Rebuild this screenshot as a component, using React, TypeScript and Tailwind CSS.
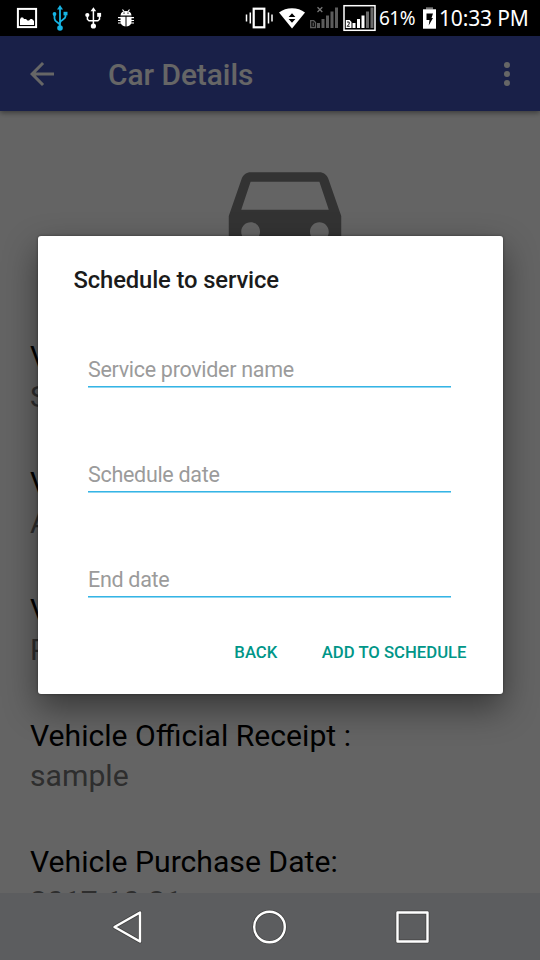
import React from "react";

const rows = [
  ["V", "S"],
  ["V", "A"],
  ["V", "P"],
  ["Vehicle Official Receipt :", "sample"],
  ["Vehicle Purchase Date:", "2017-10-21"],
];

const fields = ["Service provider name", "Schedule date", "End date"];

function NotificationIcons() {
  return (
    <svg width="142" height="36" viewBox="0 0 142 36" fill="none">
      <rect x="17.9" y="8.9" width="18.2" height="18.2" stroke="#fff" strokeWidth="2" />
      <path d="M20 25v-5.500l1-2h2l1 1.500h2l1.500 1.500h1.500l1.500-1.500h1.500l2 2V25z" fill="#fff" />
      <g stroke="#16b4e4" strokeWidth="1.8">
        <path d="M60 9v19M60 25.500c0-3-5.500-3-5.500-7V14M60 23c0-3 5.500-3.500 5.500-6.500V13" />
      </g>
      <g fill="#16b4e4">
        <path d="M60 5l3 4.500h-6z" />
        <circle cx="60" cy="28" r="2.800" />
        <circle cx="54.500" cy="14" r="1.900" />
        <rect x="63.500" y="11.800" width="4" height="3.500" />
      </g>
      <path d="M93.400 10v16M93.400 20.700h-4.400l-1.600-1.500V15M93.400 20.700h4.400l1.700-1.500V14.500" stroke="#fff" strokeWidth="1.500" />
      <g fill="#fff">
        <path d="M93.400 7.200l2.800 4h-5.600z" />
        <circle cx="93.400" cy="26" r="2.600" />
        <circle cx="87.300" cy="15" r="2.100" />
        <rect x="97.200" y="12.900" width="3.900" height="3.900" />
        <path d="M120.500 15.600c.2-3.200 2.400-4.600 5.500-4.600s5.300 1.400 5.500 4.600z" />
        <path d="M120.500 16.700h5v9.800c-3-.3-5-2-5-5zM126.500 16.700h5v4.800c0 3-2 4.700-5 5z" />
      </g>
      <path d="M122.500 9.500l1.500 2M129.500 9.500l-1.500 2M118 17.700h3M118 20.500h3M118 23h3M131 17.700h3M131 20.500h3M131 23h3" stroke="#fff" strokeWidth="1.200" />
      <path d="M124 12.500v1.300M128 12.500v1.300" stroke="#000" />
    </svg>
  );
}

function SignalIcons() {
  return (
    <svg width="134" height="36" viewBox="244 0 134 36" fill="none">
      <rect x="253.700" y="8.700" width="10.600" height="18.600" stroke="#fff" strokeWidth="2.200" />
      <path d="M250.300 12.500v11M246.500 14.500v7M268.500 12.500v11M272 14.500v7" stroke="#fff" strokeWidth="1.500" />
      <path d="M279 12.500c7-5.700 19-5.700 26 0L292 28.500z" fill="#fff" />
      <path d="M292 13.200l3.400 3.800h-6.800zM292 22.700l3.400-3.800h-6.800z" fill="#000" />
      <g fill="#5c5c5c">
        <rect x="317" y="23" width="3" height="5" />
        <rect x="321.500" y="19" width="3" height="9" />
        <rect x="326" y="15.500" width="3" height="12.500" />
        <rect x="330.500" y="11.500" width="3" height="16.500" />
        <rect x="335" y="7.500" width="3" height="20.500" />
      </g>
      <path d="M317.500 7.200l4.800 4.800M322.300 7.200l-4.800 4.800" stroke="#777" strokeWidth="1.300" />
      <path d="M310.700 20.700h3l1.800 1.800v5h-4.800zM313.200 22.500v3.500" stroke="#5c5c5c" strokeWidth="1.300" />
      <rect x="344" y="5.700" width="31" height="24.600" stroke="#fff" strokeWidth="1.500" />
      <path d="M345.800 20h3.800l1.900 1.900v6.100h-5.700z" fill="#fff" />
      <path d="M347 22h2.200v2l-2 2.300h2.500" stroke="#000" strokeWidth=".9" />
      <g fill="#fff">
        <rect x="352.500" y="23" width="3" height="5" />
        <rect x="357" y="19" width="3" height="9" />
        <rect x="361.500" y="15.500" width="3" height="12.500" />
      </g>
      <g fill="#6b6b6b">
        <rect x="366" y="11.500" width="3" height="16.500" />
        <rect x="370.500" y="7.500" width="3" height="20.500" />
      </g>
    </svg>
  );
}

function StatusBar() {
  return (
    <header className="flex h-9 w-full shrink-0 items-center bg-black font-['Noto_Sans',sans-serif] text-white">
      <NotificationIcons />
      <div className="w-[102px]" />
      <SignalIcons />
      <span className="ml-[1px] w-[44px] text-[19px] leading-9 tracking-[-0.5px] whitespace-nowrap">61%</span>
      <svg width="14" height="36" viewBox="423 0 14 36" className="shrink-0">
        <rect x="426" y="7.300" width="7" height="2.200" fill="#777" />
        <rect x="423" y="9.300" width="13" height="19.400" fill="#fff" />
        <path d="M426.500 13.500h6.500l-1.500 4.500h1.500l-4.300 7.500.8-5.500h-3z" fill="#000" />
      </svg>
      <span className="ml-[2px] text-[21px] leading-9 tracking-[-0.15px] whitespace-nowrap">10:33 PM</span>
    </header>
  );
}

function AppBar() {
  return (
    <div className="flex h-[75px] shrink-0 items-center bg-[#3f51b5] pr-[15px] pl-6 text-white shadow-[0_2px_5px_rgba(0,0,0,0.4)]">
      <svg width="36" height="36" viewBox="0 0 24 24" fill="currentColor">
        <path d="M20 11H7.830l5.590-5.590L12 4l-8 8 8 8 1.410-1.410L7.830 13H20v-2z" />
      </svg>
      <h1 className="ml-12 flex-1 pt-[3px] text-[29.8px] leading-[44px] font-medium">Car Details</h1>
      <svg width="36" height="36" viewBox="0 0 24 24" fill="currentColor">
        <circle cx="12" cy="6" r="2" />
        <circle cx="12" cy="12" r="2" />
        <circle cx="12" cy="18" r="2" />
      </svg>
    </div>
  );
}

function Details() {
  return (
    <main className="min-h-0 flex-1 overflow-hidden pt-[30px] pl-[30px]">
      <svg width="150" height="150" viewBox="0 0 24 24" fill="#808080" className="ml-[180px]">
        <path d="M18.920 6.010C18.720 5.420 18.160 5 17.500 5h-11c-.66 0-1.210.42-1.420 1.010L3 12v8c0 .55.45 1 1 1h1c.55 0 1-.45 1-1v-1h12v1c0 .55.45 1 1 1h1c.55 0 1-.45 1-1v-8l-2.080-5.990zM6.500 16c-.83 0-1.500-.67-1.500-1.500S5.670 13 6.500 13s1.500.67 1.500 1.500S7.330 16 6.500 16zm11 0c-.83 0-1.500-.67-1.500-1.500s.67-1.500 1.500-1.500 1.500.67 1.500 1.500-.67 1.500-1.500 1.500zM5 11l1.500-4.500h11L19 11H5z" />
      </svg>
      <dl className="mt-[45px] flex flex-col gap-[45.3px] text-[30.15px] leading-[41px]">
        {rows.map(([label, value], index) => (
          <div key={index}>
            <dt className="h-10 text-black">{label}</dt>
            <dd className="text-[#737373]">{value}</dd>
          </div>
        ))}
      </dl>
    </main>
  );
}

function ScheduleDialog() {
  return (
    <div className="absolute inset-x-0 top-9 bottom-[67px] bg-black/60">
      <section className="mt-[200px] ml-[37.5px] flex h-[457.5px] w-[465px] flex-col rounded-[3px] bg-white shadow-[0_14px_34px_rgba(0,0,0,0.45),0_0_3px_rgba(0,0,0,0.4)]">
        <h2 className="mt-[27px] ml-9 text-[23.8px] leading-[34px] font-medium tracking-[-0.13px] text-[#1b1b1b]">Schedule to service</h2>
        <div className="mt-[53px] ml-[50.5px] flex w-[363px] flex-col gap-[68px]">
          {fields.map((label) => (
            <div key={label} className="h-[37px] border-b border-[#35b4e5] text-[21.5px] leading-[39px] tracking-[-0.3px] text-[#9b9b9b] shadow-[0_1px_0_#8fd6f1]">
              {label}
            </div>
          ))}
        </div>
        <div className="mt-[38px] mr-9 flex justify-end gap-[44.5px] text-[16.7px] leading-9 font-medium text-[#009688]">
          <button>BACK</button>
          <button>ADD TO SCHEDULE</button>
        </div>
      </section>
    </div>
  );
}

function NavBar() {
  return (
    <nav className="flex h-[67px] shrink-0 items-center bg-[#5c5d5f]">
      <svg width="540" height="67" viewBox="0 893 540 67" fill="none">
        <g stroke="#444" strokeWidth="4" strokeLinejoin="round">
          <path d="M140 912.500v29L114.500 927z" />
          <circle cx="269.500" cy="927" r="15.300" />
          <rect x="397.500" y="912.500" width="30" height="29" />
        </g>
        <g stroke="#fff" strokeWidth="2.400" strokeLinejoin="round">
          <path d="M140 912.500v29L114.500 927z" />
          <circle cx="269.500" cy="927" r="15.300" />
          <rect x="397.500" y="912.500" width="30" height="29" />
        </g>
      </svg>
    </nav>
  );
}

export default function App() {
  return (
    <div className="relative flex h-[960px] w-[540px] flex-col overflow-hidden bg-[#fafafa] font-[Roboto,sans-serif]">
      <StatusBar />
      <AppBar />
      <Details />
      <NavBar />
      <ScheduleDialog />
    </div>
  );
}
